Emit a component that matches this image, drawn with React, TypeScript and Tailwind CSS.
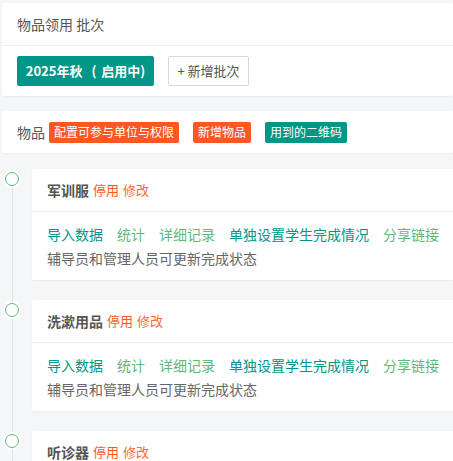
const font = { fontFamily: '"Noto Sans CJK SC", "Liberation Sans", sans-serif' };

const items = [
  { name: "军训服" },
  { name: "洗漱用品" },
  { name: "听诊器" },
];

const links = [
  { label: "导入数据", color: "text-[#009688]" },
  { label: "统计", color: "text-[#5FB878]" },
  { label: "详细记录", color: "text-[#5FB878]" },
  { label: "单独设置学生完成情况", color: "text-[#009688]" },
  { label: "分享链接", color: "text-[#5FB878]" },
];

export default function App() {
  return (
    <div
      className="min-h-screen overflow-hidden bg-[#f5f6f8] pl-[2px] pt-[3px] text-[14px] text-[#555]"
      style={font}
    >
      <div className="rounded-[2px] bg-white shadow-[0_1px_2px_0_rgba(0,0,0,0.05)]">
        <div className="flex h-[43px] items-center border-b border-[#f0f0f0] px-[15px] text-[#555]">
          物品领用 批次
        </div>
        <div className="flex items-center gap-[14px] px-[15px] py-[10px]">
          <button className="flex h-[30px] w-[137px] items-center justify-center rounded-[2px] bg-[#009688] text-[13px] font-bold text-white">
            <span>2025年秋</span>
            <span className="ml-[9px]">(</span>
            <span className="ml-[5px]">启用中)</span>
          </button>
          <button className="flex h-[30px] w-[81px] items-center justify-center rounded-[2px] border border-[#d9d9d9] bg-white text-[13px] text-[#555]">
            + 新增批次
          </button>
        </div>
      </div>

      <div className="mt-[15px] flex h-[42px] items-center rounded-[2px] bg-white px-[15px] shadow-[0_1px_2px_0_rgba(0,0,0,0.05)]">
        <span className="mr-[4px]">物品</span>
        <div className="flex items-center gap-[14px] text-[12px] text-white">
          <span className="flex h-[21px] items-center rounded-[2px] bg-[#FF5722] px-[5px]">配置可参与单位与权限</span>
          <span className="flex h-[21px] items-center rounded-[2px] bg-[#FF5722] px-[5px]">新增物品</span>
          <span className="flex h-[21px] items-center rounded-[2px] bg-[#009688] px-[5px]">用到的二维码</span>
        </div>
      </div>

      <div className="mt-[16px]">
        {items.map((item) => (
          <div key={item.name} className="relative flex pb-[20px]">
            <div className="absolute bottom-0 left-[10px] top-0 w-px bg-[#e2e2e2]" />
            <div className="relative w-[30px] flex-none">
              <div className="ml-[1px] mt-[1px] flex h-[18px] w-[18px] items-center justify-center rounded-full bg-white">
                <div className="h-[14px] w-[14px] rounded-full border-[1.5px] border-[#5FB878]" />
              </div>
            </div>
            <div className="min-w-0 flex-1 rounded-l-[2px] bg-white shadow-[0_1px_2px_0_rgba(0,0,0,0.05)]">
              <div className="flex h-[43px] items-center border-b border-[#f0f0f0] px-[15px]">
                <span className="font-bold text-[#555]">{item.name}</span>
                <span className="ml-[4px] text-[13px] text-[#FF5722]">停用</span>
                <span className="ml-[4px] text-[13px] text-[#FF6a33]">修改</span>
              </div>
              <div className="px-[15px] py-[10px] leading-[24px]">
                <div className="flex gap-[14px] whitespace-nowrap">
                  {links.map((l) => (
                    <span key={l.label} className={l.color}>
                      {l.label}
                    </span>
                  ))}
                </div>
                <div className="text-[#666]">辅导员和管理人员可更新完成状态</div>
              </div>
            </div>
          </div>
        ))}
      </div>
    </div>
  );
}
